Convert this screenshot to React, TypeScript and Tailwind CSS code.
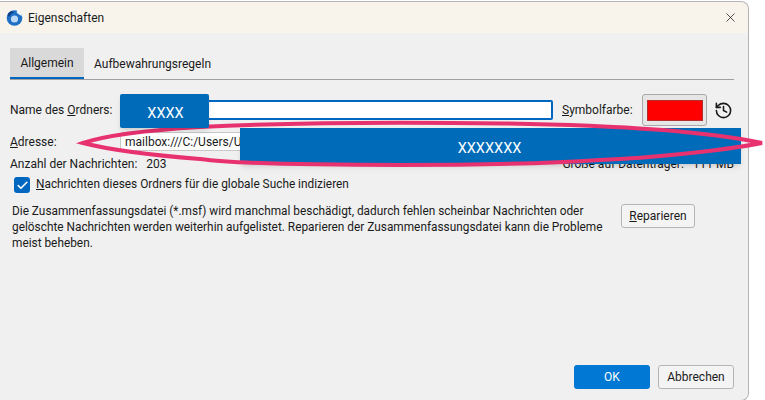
import { History, Check, X } from "lucide-react";

function BirdLogo() {
    return (
        <svg width="17" height="17" viewBox="0 0 17 17" className="shrink-0">
            <circle cx="8.5" cy="9" r="7.8" fill="#1f6fc4" />
            <circle cx="8.5" cy="10" r="3.6" fill="#bcd8f4" />
            <path d="M1.5 6 C3 2 6 1 8 3.5 C6 4 4 5.5 3.5 8 Z" fill="#0b3f86" />
            <path d="M11.5 1 C14 2 15.8 4.5 15.8 7 C14 6 12 5 10.5 3.5 Z" fill="#f3f6fb" />
        </svg>
    );
}

export default function App() {
    return (
        <div className="relative w-[765px] h-[400px] bg-white overflow-hidden text-[12px] text-[#1a1a1a] font-['Roboto',sans-serif]">
            {/* Dialog */}
            <div className="w-[749px] h-[400px] mt-[1px] flex flex-col bg-[#f0f0f0] rounded-tr-lg rounded-br-lg border border-l-0 border-[#b4b4b4]">
                {/* Title bar */}
                <div className="h-[31px] shrink-0 flex items-center justify-between pl-[6px] pr-[10px] bg-[#f8f4ec] rounded-tr-lg">
                    <div className="flex items-center gap-[5px]">
                        <BirdLogo />
                        <span>Eigenschaften</span>
                    </div>
                    <X size={15} strokeWidth={1.2} />
                </div>

                <div className="flex-1 flex flex-col pl-[10px] pr-[14px] pt-[15px]">
                    {/* Tabs */}
                    <div className="flex items-stretch h-[32px] shrink-0 border-b border-[#a0a0a0]">
                        <div className="w-[74px] flex items-center justify-center bg-[#d9d9d9] border-b-2 border-[#0067c0]">Allgemein</div>
                        <div className="flex items-center pl-[10px]">Aufbewahrungsregeln</div>
                    </div>

                    {/* Name */}
                    <div className="flex items-center h-[32px] mt-[14px] shrink-0">
                        <span className="w-[110px] shrink-0">Name des <u>O</u>rdners:</span>
                        <div className="w-[433px] h-[20px] bg-white border-2 border-[#0067c0] rounded-[2px]" />
                        <span className="ml-[9px] w-[80px] shrink-0"><u>S</u>ymbolfarbe:</span>
                        <div className="w-[65px] h-[32px] flex items-center justify-center rounded-[3px] border border-[#a9a9a9] bg-[#e6e6e6]">
                            <div className="w-[56px] h-[21px] bg-[#ff0000] border border-[#b03030]" />
                        </div>
                        <History size={19} strokeWidth={2} className="ml-[7px]" />
                    </div>

                    {/* Address */}
                    <div className="flex items-center h-[19px] mt-[6px] shrink-0">
                        <span className="w-[110px] shrink-0"><u>A</u>dresse:</span>
                        <div className="flex-1 h-[19px] pl-[4px] bg-white border border-[#c8c8c8] rounded-[2px] flex items-center">mailbox:///C:/Users/U</div>
                    </div>

                    {/* Count and size */}
                    <div className="flex items-center justify-between h-[20px] mt-[3px] shrink-0">
                        <div className="flex gap-[9px]">
                            <span>Anzahl der Nachrichten:</span>
                            <span>203</span>
                        </div>
                        <div className="flex gap-[9px]">
                            <span>Größe auf Datenträger:</span>
                            <span>111 MB</span>
                        </div>
                    </div>

                    {/* Index checkbox */}
                    <div className="flex items-center gap-[6px] ml-[4px] mt-[3px] h-[16px] shrink-0">
                        <div className="w-[16px] h-[16px] rounded-[3px] bg-[#0067c0] flex items-center justify-center">
                            <Check size={13} strokeWidth={3} className="text-white" />
                        </div>
                        <span className="text-[11.85px]"><u>N</u>achrichten dieses Ordners für die globale Suche indizieren</span>
                    </div>

                    {/* Repair */}
                    <div className="flex items-start justify-between mt-[10px] ml-[2px] shrink-0">
                        <p className="text-[11.85px] leading-[16px] whitespace-nowrap">
                            Die Zusammenfassungsdatei (*.msf) wird manchmal beschädigt, dadurch fehlen scheinbar Nachrichten oder<br />
                            gelöschte Nachrichten werden weiterhin aufgelistet. Reparieren der Zusammenfassungsdatei kann die Probleme<br />
                            meist beheben.
                        </p>
                        <button className="w-[74px] h-[24px] mr-[39px] mt-[1px] bg-[#f4f4f4] border border-[#b5b5b5] rounded-[3px]"><u>R</u>eparieren</button>
                    </div>

                    {/* Footer */}
                    <div className="flex justify-end gap-[8px] mt-auto mb-[11px]">
                        <button className="w-[76px] h-[24px] bg-[#0078d4] text-white rounded-[3px]">OK</button>
                        <button className="w-[76px] h-[24px] bg-[#f4f4f4] border border-[#b5b5b5] rounded-[3px]">Abbrechen</button>
                    </div>
                </div>
            </div>

            {/* Redaction marks drawn over the screenshot */}
            <div className="absolute left-[240px] top-[128px] w-[501px] h-[36px] bg-[#006cb9] shadow-md text-white text-[14.5px] flex items-center justify-center pt-[6px] pr-[2px]">XXXXXXX</div>
            <svg className="absolute left-0 top-0" width="765" height="400" fill="none">
                <path d="M83 143 C110 134 150 130 200 127 C280 123 400 122 505 123.5 C600 125 700 130 762 143 C720 151 650 158 600 160 C540 164 470 165 400 165 C300 165 230 163 200 159 C150 155 110 150 83 143 Z" stroke="#e8326f" strokeWidth="4" />
            </svg>
            <div className="absolute left-[120px] top-[94px] w-[89px] h-[34px] bg-[#006cb9] rounded-[2px] shadow-md text-white text-[14.5px] flex items-center justify-center pt-[6px] pl-[2px]">XXXX</div>
        </div>
    );
}
